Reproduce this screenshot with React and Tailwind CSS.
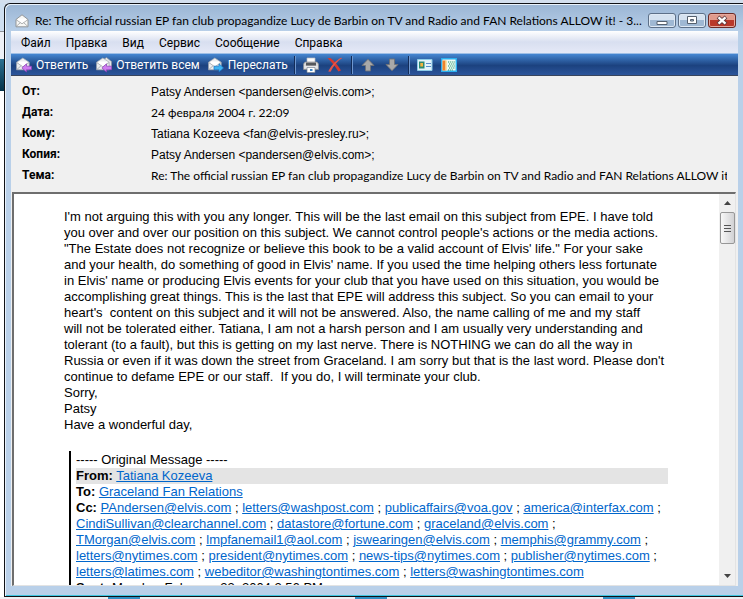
import { Fragment } from 'react';

const menuItems = ['Файл', 'Правка', 'Вид', 'Сервис', 'Сообщение', 'Справка'];

const subject =
  'Re: The official russian EP fan club propagandize Lucy de Barbin on TV and Radio and FAN Relations ALLOW it!';

const fields = [
  { label: 'От:', value: 'Patsy Andersen <pandersen@elvis.com>;', address: true },
  { label: 'Дата:', value: '24 февраля 2004 г. 22:09' },
  { label: 'Кому:', value: 'Tatiana Kozeeva <fan@elvis-presley.ru>;', address: true },
  { label: 'Копия:', value: 'Patsy Andersen <pandersen@elvis.com>;', address: true },
  { label: 'Тема:', value: subject },
];

const bodyLines = [
  "I'm not arguing this with you any longer. This will be the last email on this subject from EPE. I have told",
  "you over and over our position on this subject. We cannot control people's actions or the media actions.",
  '"The Estate does not recognize or believe this book to be a valid account of Elvis\' life." For your sake',
  "and your health, do something of good in Elvis' name. If you used the time helping others less fortunate",
  "in Elvis' name or producing Elvis events for your club that you have used on this situation, you would be",
  'accomplishing great things. This is the last that EPE will address this subject. So you can email to your',
  "heart's  content on this subject and it will not be answered. Also, the name calling of me and my staff",
  'will not be tolerated either. Tatiana, I am not a harsh person and I am usually very understanding and',
  'tolerant (to a fault), but this is getting on my last nerve. There is NOTHING we can do all the way in',
  "Russia or even if it was down the street from Graceland. I am sorry but that is the last word. Please don't",
  'continue to defame EPE or our staff.  If you do, I will terminate your club.',
  'Sorry,',
  'Patsy',
  'Have a wonderful day,',
];

const ccLines = [
  ['PAndersen@elvis.com', 'letters@washpost.com', 'publicaffairs@voa.gov', 'america@interfax.com'],
  ['CindiSullivan@clearchannel.com', 'datastore@fortune.com', 'graceland@elvis.com'],
  ['TMorgan@elvis.com', 'lmpfanemail1@aol.com', 'jswearingen@elvis.com', 'memphis@grammy.com'],
  ['letters@nytimes.com', 'president@nytimes.com', 'news-tips@nytimes.com', 'publisher@nytimes.com'],
  ['letters@latimes.com', 'webeditor@washingtontimes.com', 'letters@washingtontimes.com'],
];

function Envelope({ className }) {
  return (
    <svg className={className} viewBox="0 0 14 14" aria-hidden="true">
      <path d="M1 5.5 7 .8l6 4.7v7.3H1z" fill="#f7f7f5" stroke="#8b8d8e" strokeWidth=".9" />
      <path d="M3 4.5h8v3L7 10 3 7.5z" fill="#fff" />
      <path d="m1 5.6 6 4.2 6-4.2M1 12.6l4.4-4M13 12.6l-4.4-4" fill="none" stroke="#9c9fa1" strokeWidth=".8" />
    </svg>
  );
}

function MailIcon({ kind }) {
  return (
    <svg className="h-4 w-4" viewBox="0 0 16 16" aria-hidden="true">
      {kind === 'all' && (
        <path d="M5 4.5 10.5.5l5 4v7.5H5z" fill="#e5e7ea" stroke="#8f969f" strokeWidth=".7" />
      )}
      <path d="M.6 5.2 6.8 1l6.4 4.2v7.6H.6z" fill="#eceef0" stroke="#a4a9b0" strokeWidth=".7" />
      <path d="M2.6 4.6h8.6v2.6L6.9 9.8 2.6 7.2z" fill="#fff" />
      <path d="m.8 5.6 6.1 4.2 6.1-4.2M.8 12.6l4.4-4" fill="none" stroke="#a0a4aa" strokeWidth=".8" />
      {kind === 'forward' ? (
        <path d="M6 9.2h5V6.8l4.6 4.1L11 15v-2.3H6z" fill="#3fb3f2" stroke="#1573c4" strokeWidth=".7" />
      ) : (
        <path d="M15.5 9.2h-5V6.8l-4.6 4.1 4.6 4.1v-2.3h5z" fill="#cf7df0" stroke="#8b3fb8" strokeWidth=".7" />
      )}
    </svg>
  );
}

function PrintIcon() {
  return (
    <svg className="h-4 w-4" viewBox="0 0 16 16" aria-hidden="true">
      <path d="M4 6V1h8v5" fill="#fbfbfb" stroke="#b9bcc0" strokeWidth=".7" />
      <path d="M2 5h12l1.5 2v5.5H.5V7z" fill="#d7d8d9" stroke="#8a8c8e" strokeWidth=".7" />
      <path d="M3 5.6h10v3H3z" fill="#55585c" />
      <path d="M1.5 10h13" stroke="#f8f8f8" />
      <path d="M4 10.5h8v5H4z" fill="#fff" stroke="#7c8793" strokeWidth=".7" />
      <path d="M7 12h2.5v2H7z" fill="#3b86c6" />
    </svg>
  );
}

function DeleteIcon() {
  return (
    <svg className="h-4 w-4" viewBox="0 0 16 16" aria-hidden="true">
      <path d="M.5 1.2 3.4 1C7 3.6 11 8.4 14 13.6l-2.6 1C8.400 9.400 5 5.200.5 1.200z" fill="#d8392f" />
      <path d="M15.300 1C10.600 4 6.400 8.800 3.600 14.800l-2.400-.4C4.400 8.400 9 3.400 14 .8z" fill="#e4554a" />
    </svg>
  );
}

function ArrowIcon({ down }) {
  return (
    <svg className="h-4 w-4" viewBox="0 0 16 16" aria-hidden="true">
      <path
        d={down ? 'M5.5 2h5v5.5H14L8 13.8 2 7.5h3.5z' : 'M5.5 14h5V8.5H14L8 2.2 2 8.5h3.5z'}
        fill="#a9a9a9"
        stroke="#6f7277"
        strokeWidth=".9"
      />
    </svg>
  );
}

function ContactIcon() {
  return (
    <svg className="h-4 w-4" viewBox="0 0 16 16" aria-hidden="true">
      <path d="M.5 2.5h14.5v11H.5z" fill="#e3f4fb" stroke="#8ccbe8" />
      <path d="M2 4.500h5.500v7H2z" fill="#2c8a72" />
      <path d="M3.300 6h2.700v3.500H3.300z" fill="#f5b43c" />
      <path d="M9 6.5h5M9 9.5h5" stroke="#5a8fca" />
    </svg>
  );
}

function JournalIcon() {
  return (
    <svg className="h-4 w-4" viewBox="0 0 16 16" aria-hidden="true">
      <path d="M.7 1.7h14.6v12.6H.7z" fill="#f0fbf6" stroke="#2ab0f0" strokeWidth="1.4" />
      <path d="M1.5 3.500h3.200v10H1.500z" fill="#f0842a" />
      <path d="M4.500 3.500H6v10H4.500z" fill="#fbe3a4" />
      <path d="M7 5h7M8 7h6M7 9h7M8 11h6M7 13h5" stroke="#1d9464" strokeWidth="1.1" strokeDasharray="1.2 .9" />
    </svg>
  );
}

function Separator() {
  return <span className="mx-1 h-[18px] w-px bg-[#132c58] shadow-[1px_0_0_#6f97cf]" />;
}

function ToolButton({ label, children }) {
  return (
    <button type="button" aria-label={label} className="flex h-5 w-6 items-center justify-center">
      {children}
    </button>
  );
}

function TitleBar() {
  const frame =
    'flex h-[15px] w-7 items-center justify-center rounded-[3px] border border-[#5d7088] bg-linear-to-b from-[#d5e2f0] from-45% to-[#9fb8d3] to-50% shadow-[inset_0_0_0_1px_#dfe9f4]';
  return (
    <header className="flex h-[27px] items-center pt-1.5 pr-[7px] pl-2.5">
      <Envelope className="h-[14px] w-[14px] shrink-0" />
      <h1 className="ml-1.5 min-w-0 flex-1 overflow-hidden font-[Lato,Roboto,sans-serif] text-[12px] whitespace-nowrap">
        {subject} - 3...
      </h1>
      <div className="flex shrink-0 gap-0.5 pl-1">
        <button type="button" aria-label="Свернуть" className={frame}>
          <svg className="h-[11px] w-3" viewBox="0 0 12 11">
            <path d="M1 6.5h10v3H1z" fill="#fff" stroke="#55606e" />
          </svg>
        </button>
        <button type="button" aria-label="Развернуть" className={frame}>
          <svg className="h-[11px] w-3" viewBox="0 0 12 11">
            <path d="M1.5 1.5h9v7h-9zM4.5 4.5h3v1.5h-3z" fill="#fff" fillRule="evenodd" stroke="#55606e" />
          </svg>
        </button>
        <button
          type="button"
          aria-label="Закрыть"
          className="flex h-[15px] w-7 items-center justify-center rounded-[3px] border border-[#6b2a26] bg-linear-to-b from-[#e09a8c] from-45% to-[#b9382a] to-50% shadow-[inset_0_0_0_1px_#e6a99e]"
        >
          <svg className="h-[11px] w-3" viewBox="0 0 12 11">
            <path d="m2 2 8 7M10 2 2 9" stroke="#5b3a3e" strokeWidth="4" />
            <path d="m2.5 2.4 7 6.2M9.5 2.4l-7 6.2" stroke="#fff" strokeWidth="2.3" />
          </svg>
        </button>
      </div>
    </header>
  );
}

function ScrollBar() {
  return (
    <div className="flex w-4 shrink-0 flex-col items-center bg-[#f0f0f0]">
      <button type="button" aria-label="Вверх" className="flex h-[18px] w-full items-center justify-center">
        <svg className="h-1 w-[7px]" viewBox="0 0 7 4">
          <path d="M0 4 3.5 0 7 4z" fill="#444" />
        </svg>
      </button>
      <div className="flex h-8 w-[15px] flex-col items-center justify-center gap-0.5 rounded-[2px] border border-[#979797] bg-linear-to-r from-[#f8f8f8] to-[#d2d2d4]">
        <span className="h-px w-[7px] bg-[#555]" />
        <span className="h-px w-[7px] bg-[#555]" />
        <span className="h-px w-[7px] bg-[#555]" />
      </div>
      <button type="button" aria-label="Вниз" className="mt-auto flex h-[18px] w-full items-center justify-center">
        <svg className="h-1 w-[7px]" viewBox="0 0 7 4">
          <path d="M0 0h7L3.5 4z" fill="#444" />
        </svg>
      </button>
    </div>
  );
}

function MailLink({ children }) {
  return (
    <a href={`mailto:${children}`} className="text-[#0066cc] underline">
      {children}
    </a>
  );
}

function Message() {
  return (
    <article className="min-w-0 flex-1 overflow-hidden pt-[15px] pr-[51px] pl-[50px] font-['Liberation_Sans',Arial,sans-serif] text-[13px] leading-4 whitespace-pre">
      {bodyLines.map((line) => (
        <p key={line}>{line}</p>
      ))}
      <blockquote className="mt-[18px] ml-[5px] border-l-2 border-black pt-px pl-[5px]">
        <p>----- Original Message -----</p>
        <p className="bg-[#e4e4e4]">
          <b>From:</b> <MailLink>Tatiana Kozeeva</MailLink>
        </p>
        <p>
          <b>To:</b> <MailLink>Graceland Fan Relations</MailLink>
        </p>
        {ccLines.map((line, i) => (
          <p key={line[0]}>
            {i === 0 && <b>Cc: </b>}
            {line.map((mail, j) => (
              <Fragment key={mail}>
                <MailLink>{mail}</MailLink>
                {i === ccLines.length - 1 && j === line.length - 1 ? '' : ' ; '}
              </Fragment>
            ))}
          </p>
        ))}
        <p>
          <b>Sent:</b> Monday, February 23, 2004 2:56 PM
        </p>
      </blockquote>
    </article>
  );
}

export default function App() {
  return (
    <div className="flex h-screen flex-col overflow-hidden bg-[#d3dfee] font-[Roboto,'Noto_Sans',sans-serif] text-black">
      <div className="flex min-h-0 flex-1 pt-[3px]">
        {/* Edge of the window behind */}
        <div className="flex w-1 shrink-0 flex-col bg-white">
          <span className="h-7 bg-[#cfdff0]" />
          <span className="h-7 border-t border-[#8f9499] bg-[#eef1f6]" />
          <span className="h-8 bg-linear-to-b from-[#2c7292] to-[#04334a]" />
        </div>

        <main className="flex min-w-0 flex-1 flex-col rounded-tl-md border-t border-b border-l border-[#101216] bg-linear-to-b from-[#9ab5d4] to-[#b9d0e9] to-[28px] shadow-[inset_1px_1px_0_#e9f2fb,inset_0_-1px_0_#3fc6e0]">
          <TitleBar />
          <div className="mr-[5px] mb-2.5 ml-1.5 flex min-h-0 flex-1 flex-col bg-[#f0f0f0]">
            <nav className="flex h-[22px] shrink-0 items-center gap-[15px] bg-linear-to-b from-white via-[#d8dff0] via-50% to-[#e5e9f7] pt-0.5 pl-2.5 text-[12px]">
              {menuItems.map((item) => (
                <button key={item} type="button">
                  {item}
                </button>
              ))}
            </nav>

            <div className="flex h-[23px] shrink-0 items-center border-t border-b border-t-[#9fbfe6] border-b-[#39455c] bg-linear-to-b from-[#4687d2] via-[#1c427f] via-55% to-[#2c559b] pl-[5px] text-[12px] text-white">
              <div className="flex gap-2 pr-0.5">
                <button type="button" className="flex items-center gap-1">
                  <MailIcon kind="reply" />
                  Ответить
                </button>
                <button type="button" className="flex items-center gap-1">
                  <MailIcon kind="all" />
                  Ответить всем
                </button>
                <button type="button" className="flex items-center gap-1">
                  <MailIcon kind="forward" />
                  Переслать
                </button>
              </div>
              <Separator />
              <ToolButton label="Печать">
                <PrintIcon />
              </ToolButton>
              <ToolButton label="Удалить">
                <DeleteIcon />
              </ToolButton>
              <Separator />
              <ToolButton label="Предыдущее">
                <ArrowIcon />
              </ToolButton>
              <ToolButton label="Следующее">
                <ArrowIcon down />
              </ToolButton>
              <Separator />
              <ToolButton label="Контакт">
                <ContactIcon />
              </ToolButton>
              <ToolButton label="Контакты">
                <JournalIcon />
              </ToolButton>
            </div>

            <dl className="shrink-0 pt-[5px] pr-[11px] pb-1.5 pl-[11px] text-[12px] leading-[21px]">
              {fields.map(({ label, value, address }) => (
                <div key={label} className="flex">
                  <dt className="w-[129px] shrink-0 font-bold">{label}</dt>
                  <dd
                    className={
                      address
                        ? "min-w-0 overflow-hidden pt-px font-['Liberation_Sans',Arial,sans-serif] leading-5 whitespace-nowrap"
                        : 'min-w-0 overflow-hidden font-[Lato,Roboto,sans-serif] whitespace-nowrap'
                    }
                  >
                    {value}
                  </dd>
                </div>
              ))}
            </dl>

            <section className="mr-0.5 ml-px flex min-h-0 flex-1 border-t-2 border-r border-b border-l-2 border-t-[#6e6e6e] border-r-[#e3e3e3] border-b-[#e3e3e3] border-l-[#6e6e6e] bg-white">
              <Message />
              <ScrollBar />
            </section>
          </div>
        </main>
      </div>

      {/* Page icons showing below the window */}
      <div className="flex h-0.5 shrink-0 justify-around bg-[#eef0f3]">
        <span className="w-8 bg-[#2f8fc4]" />
        <span className="w-8 bg-[#2f8fc4]" />
        <span className="w-8 bg-[#2f8fc4]" />
      </div>
    </div>
  );
}
